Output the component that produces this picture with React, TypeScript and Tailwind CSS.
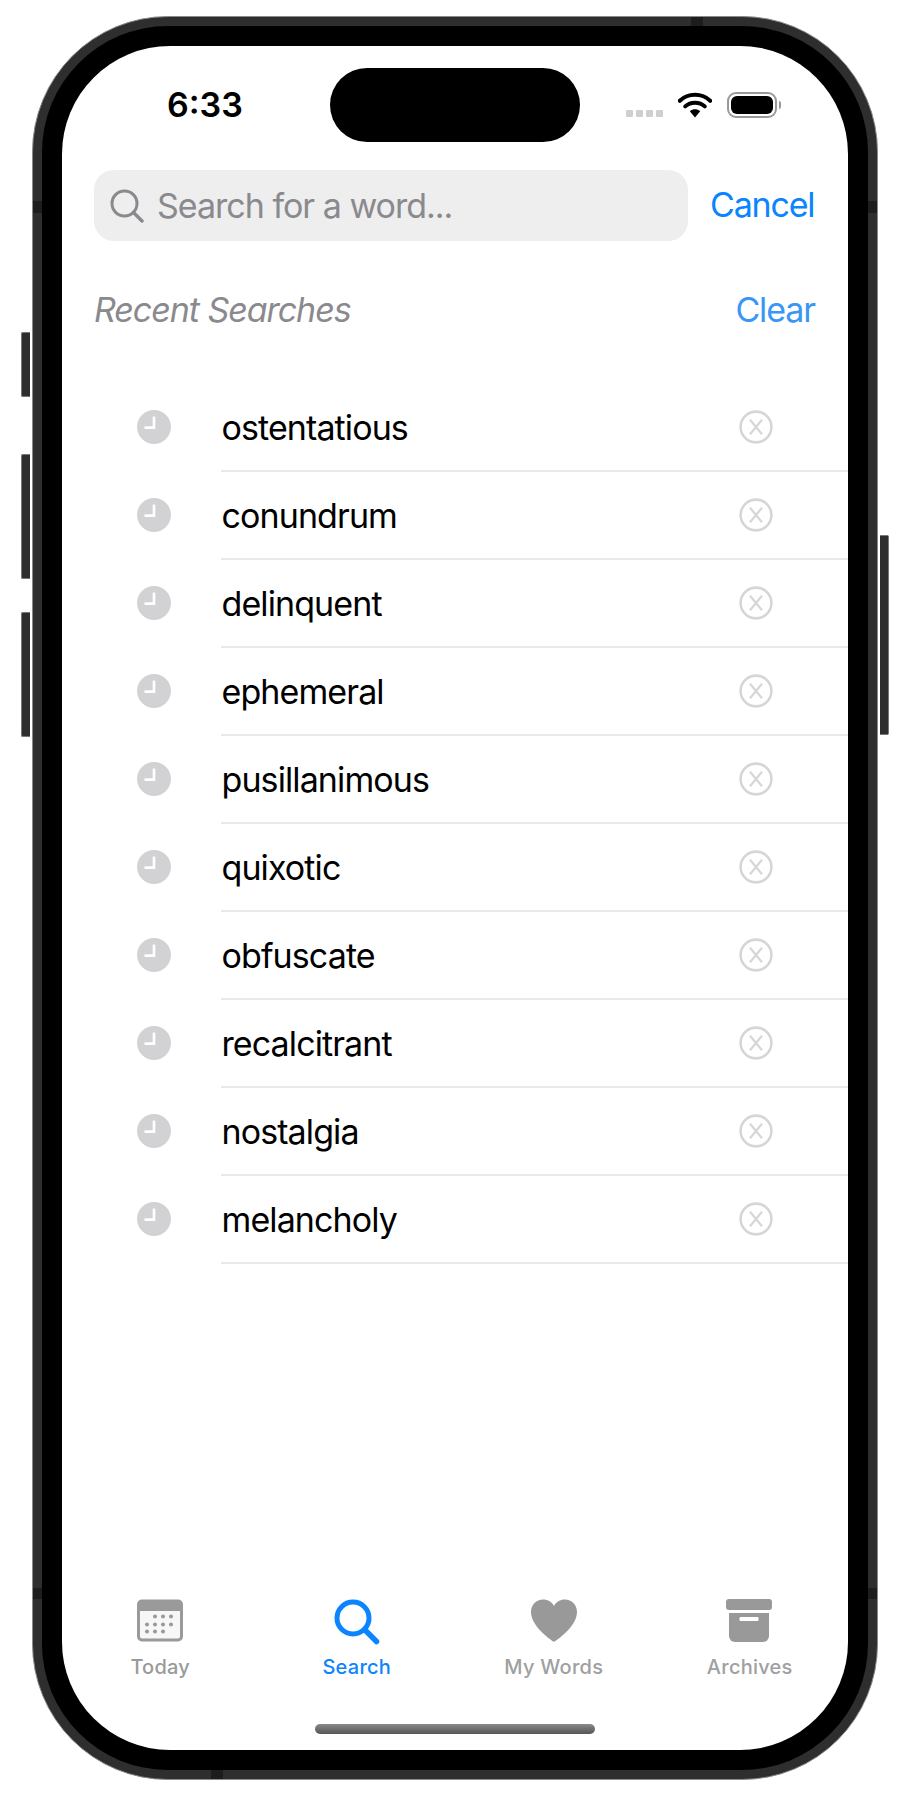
import React from "react";

const WORDS = ["ostentatious","conundrum","delinquent","ephemeral","pusillanimous","quixotic","obfuscate","recalcitrant","nostalgia","melancholy"];

function Clock() {
  return (
    <svg width="34" height="34" viewBox="0 0 34 34" className="shrink-0">
      <circle cx="17" cy="17" r="17" fill="#d2d2d5" />
      <path d="M17 6.5V17.6H7.5" fill="none" stroke="#ffffff" strokeWidth="2.6" />
    </svg>
  );
}
function Cross() {
  return (
    <svg width="34" height="34" viewBox="0 0 34 34" className="shrink-0">
      <circle cx="17" cy="17" r="15.4" fill="none" stroke="#d6d6d6" strokeWidth="2.6" />
      <path d="M11 9.8L23 24.2M23 9.8L11 24.2" fill="none" stroke="#d6d6d6" strokeWidth="2.2" />
    </svg>
  );
}
function Row({ word }: { word: string }) {
  return (
    <div className="flex h-[88px] items-stretch">
      <div className="flex w-[159px] shrink-0 items-center pl-[75px] pb-[2px]"><Clock /></div>
      <div className="flex flex-1 items-center border-b-2 border-[#e9e9ea] pr-[75px]">
        <span className="flex-1 pt-[2px] pl-[0.5px] text-[34px] leading-none tracking-[-0.9px] text-black">{word}</span>
        <Cross />
      </div>
    </div>
  );
}
function Tab({ label, color, children }: { label: string; color: string; children: React.ReactNode }) {
  return (
    <div className="flex flex-col items-center">
      <div className="flex h-[46px] items-start justify-center">{children}</div>
      <span className={`mt-[10px] text-[20px] leading-[24px] font-medium tracking-[0.25px] ${color}`}>{label}</span>
    </div>
  );
}

export default function App() {
  return (
    <div className="relative h-[1802px] w-[900px] overflow-hidden bg-white pt-[16px] pl-[32px] font-['Inter','Liberation_Sans',sans-serif]">
      {/* side buttons */}
      <div className="absolute top-[332px] left-[21px] h-[65px] w-[9px] rounded-l-[2px] border border-r-0 border-[#777] bg-[#2e2e2e]" />
      <div className="absolute top-[454px] left-[21px] h-[125px] w-[9px] rounded-l-[2px] border border-r-0 border-[#777] bg-[#2e2e2e]" />
      <div className="absolute top-[612px] left-[21px] h-[125px] w-[9px] rounded-l-[2px] border border-r-0 border-[#777] bg-[#2e2e2e]" />
      <div className="absolute top-[535px] left-[880px] h-[200px] w-[9px] rounded-r-[2px] border border-l-0 border-[#777] bg-[#2e2e2e]" />

      <div className="relative h-[1764px] w-[846px] rounded-[136px] border border-[#8a8a8a] bg-[#2e2e2e] p-[9px]">
        {/* antenna bands */}
        <div className="absolute top-[184px] left-0 h-[12px] w-[9px] bg-[#1d1d1d]" />
        <div className="absolute top-[184px] right-0 h-[12px] w-[9px] bg-[#1d1d1d]" />
        <div className="absolute top-[1571px] left-0 h-[11px] w-[9px] bg-[#1d1d1d]" />
        <div className="absolute top-[1571px] right-0 h-[11px] w-[9px] bg-[#1d1d1d]" />
        <div className="absolute top-0 left-[658px] h-[9px] w-[12px] bg-[#1d1d1d]" />
        <div className="absolute bottom-0 left-[178px] h-[9px] w-[12px] bg-[#1d1d1d]" />

        <div className="h-full w-full rounded-[126px] bg-black p-[20px]">
          <div className="flex h-full w-full flex-col overflow-hidden rounded-[108px] bg-white">
            {/* status bar */}
            <div className="flex h-[96px] shrink-0 pt-[22px]">
              <div className="flex w-[268px] items-center pl-[105px]">
                <span className="text-[34px] leading-none font-semibold text-black">6:33</span>
              </div>
              <div className="h-[74px] w-[250px] rounded-full bg-black" />
              <div className="ml-[46px] flex h-[74px] items-center">
                <div className="mt-[17px] flex gap-[3px]">
                  <span className="h-[7px] w-[7px] rounded-[1px] bg-[#cfcfcf]" />
                  <span className="h-[7px] w-[7px] rounded-[1px] bg-[#cfcfcf]" />
                  <span className="h-[7px] w-[7px] rounded-[1px] bg-[#cfcfcf]" />
                  <span className="h-[7px] w-[7px] rounded-[1px] bg-[#cfcfcf]" />
                </div>
                <svg width="34" height="26" viewBox="0 0 34 26" className="mt-[-1px] ml-[15px]">
                  <path d="M1.8 8.8C10 0.8 24 0.8 32.2 8.8" fill="none" stroke="#000" strokeWidth="4" strokeLinecap="round" />
                  <path d="M7.2 14.4C12.5 9.4 21.5 9.4 26.8 14.4" fill="none" stroke="#000" strokeWidth="4" strokeLinecap="round" />
                  <path d="M11.8 19.2C15 16.6 19 16.6 22.2 19.2L17 25.5Z" fill="#000" />
                </svg>
                <div className="ml-[15px] flex items-center">
                  <div className="h-[26px] w-[50px] rounded-[9px] border-2 border-[#9a9a9a] bg-white p-[2px]">
                    <div className="h-full w-full rounded-[6px] bg-black" />
                  </div>
                  <div className="ml-[2px] h-[8px] w-[2px] rounded-r-[2px] bg-[#9a9a9a]" />
                </div>
              </div>
            </div>

            {/* search */}
            <div className="mt-[28px] flex h-[71px] shrink-0 items-center pl-[32px]">
              <div className="flex h-full w-[594px] items-center rounded-[20px] bg-[#eeeeef] pl-[16px]">
                <svg width="34" height="34" viewBox="0 0 34 34" className="shrink-0">
                  <circle cx="14.5" cy="14.5" r="12.5" fill="none" stroke="#8a8a8e" strokeWidth="3" />
                  <path d="M23.5 23.5L32 32" fill="none" stroke="#8a8a8e" strokeWidth="3.4" strokeLinecap="round" />
                </svg>
                <span className="ml-[13px] text-[34px] leading-none tracking-[-1px] text-[#8a8a8e]">Search for a word...</span>
              </div>
              <span className="mb-[2px] ml-[22px] text-[34px] leading-none tracking-[-1.2px] text-[#0a84ff]">Cancel</span>
            </div>

            {/* recents header */}
            <div className="mt-[46px] flex h-[46px] shrink-0 items-center justify-between pr-[33px] pl-[32px]">
              <span className="text-[34px] leading-none tracking-[-1.05px] text-[#8a8a8e] italic">Recent Searches</span>
              <span className="text-[34px] leading-none tracking-[-1.1px] text-[#3a96f5]">Clear</span>
            </div>

            {/* list */}
            <div className="mt-[51px] flex shrink-0 flex-col">
              {WORDS.map((w) => <Row key={w} word={w} />)}
            </div>

            {/* tabs */}
            <div className="mt-auto grid shrink-0 grid-cols-4">
              <Tab label="Today" color="text-[#9a9a9a]">
                <svg width="46" height="43" viewBox="0 0 46 42" className="-ml-[1px]">
                  <rect x="1.5" y="1.5" width="43" height="39" rx="3.5" fill="#f7f7f7" stroke="#9a9a9a" strokeWidth="3" />
                  <path d="M1 11.5V4.5A3.5 3.5 0 0 1 4.5 1H41.5A3.5 3.5 0 0 1 45 4.5V11.5Z" fill="#9a9a9a" />
                  {[[18,17],[26,17],[34,17],[10,25],[18,25],[26,25],[34,25],[10,32],[18,32],[26,32]].map(([x,y]) => (
                    <circle key={`${x}-${y}`} cx={x} cy={y} r="2" fill="#9a9a9a" />
                  ))}
                </svg>
              </Tab>
              <Tab label="Search" color="text-[#0a84ff]">
                <svg width="46" height="46" viewBox="0 0 46 46">
                  <circle cx="19" cy="19" r="16" fill="none" stroke="#0a84ff" strokeWidth="5" />
                  <path d="M31 31L42.5 42.5" fill="none" stroke="#0a84ff" strokeWidth="5.5" strokeLinecap="round" />
                </svg>
              </Tab>
              <div className="pl-[1px]">
                <Tab label="My Words" color="text-[#a0a0a0]">
                  <svg width="46" height="44" viewBox="0 0 46 44">
                    <path d="M23 43C21 41.5 0 28 0 13C0 5.5 5.5 0.5 12 0.5C17 0.5 21 3 23 7C25 3 29 0.5 34 0.5C40.5 0.5 46 5.5 46 13C46 28 25 41.5 23 43Z" fill="#999999" />
                  </svg>
                </Tab>
              </div>
              <Tab label="Archives" color="text-[#a0a0a0]">
                <svg width="46" height="43" viewBox="0 0 46 43" className="-ml-[1px]">
                  <rect x="0" y="0" width="46" height="11" rx="3" fill="#999999" />
                  <path d="M3 14H43V37A6 6 0 0 1 37 43H9A6 6 0 0 1 3 37Z" fill="#999999" />
                  <rect x="13.5" y="18" width="19" height="4" rx="1" fill="#ffffff" />
                </svg>
              </Tab>
            </div>

            {/* home indicator */}
            <div className="mt-[45px] mb-[16px] flex shrink-0 justify-center">
              <div className="h-[10px] w-[280px] rounded-full bg-gradient-to-b from-[#8a8a8a] to-[#555555]" />
            </div>
          </div>
        </div>
      </div>
    </div>
  );
}
